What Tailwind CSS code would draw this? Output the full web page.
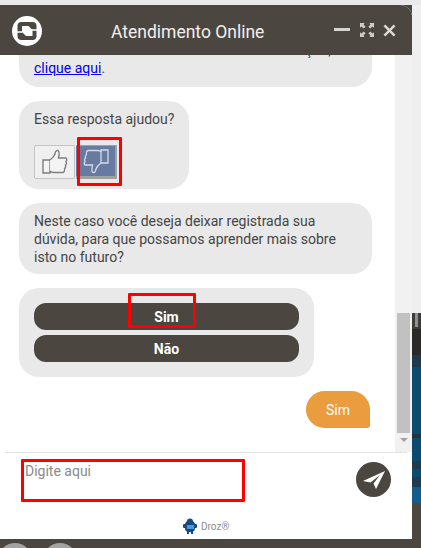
<!DOCTYPE html>
<html>
<head>
<meta charset="utf-8">
<script src="https://cdn.jsdelivr.net/npm/@tailwindcss/browser@4"></script>
</head>
<body class="m-0 overflow-hidden bg-[#4c4640]">
<div class="relative w-[421px] h-[548px] overflow-hidden bg-[#4c4640] font-['Roboto',sans-serif]">
  <!-- backdrop -->
  <div class="absolute right-0 top-0 w-[9px] h-[313px] bg-[#efefef]"></div>
  <div class="absolute right-0 top-[313px] w-[9px] h-[190px] overflow-hidden bg-[#0d4a6f]">
    <div class="h-[16px] bg-[#3b3d38] pl-[3px]"><div class="w-[3px] h-[14px] bg-[#8b938c]"></div></div>
    <div class="h-[26px] bg-[#2b2a28]"></div>
    <div class="h-[12px] bg-[#1f3a4a]"></div>
    <div class="mt-[67px] h-[4px] bg-[#24323a]"></div>
    <div class="mt-[23px] h-[8px] bg-[#1d3c50]"></div>
    <div class="mt-[8px] h-[10px] bg-[#1d3c50]"></div>
    <div class="h-[16px] bg-[#125d8c]"></div>
  </div>
  <div class="absolute left-0 top-0 w-[421px] h-[5px] bg-[#e9e9e9]"></div>
  <div class="absolute left-[-2px] top-[543px] w-[34px] h-[34px] rounded-full bg-[#a3a3a1]"></div>
  <div class="absolute left-[43px] top-[543px] w-[34px] h-[34px] rounded-full bg-[#a3a3a1]"></div>

  <!-- chat window -->
  <div class="absolute left-0 top-[5px] w-[412px] h-[534px] flex flex-col bg-white rounded-tr-[12px] overflow-hidden">
    <header class="shrink-0 h-[50px] bg-[#4c4640] flex items-center text-[#f1f0ee]">
      <svg class="ml-[12px] mt-[2px] shrink-0" width="30" height="30" viewBox="0 0 30 30">
        <circle cx="15" cy="15" r="15" fill="#fff"/>
        <path d="M5.5 10 Q5.5 6 9.5 6 H20.5 Q24.5 6 24.5 10 V20 Q24.5 24 20.5 24 H9.5 Q5.5 24 5.5 20 Z" fill="#4c4640"/>
        <path d="M10 10 H16.5 L20.5 14 V20 H14 L10 16 Z" fill="#fff"/>
        <path d="M10.5 16 L5 16 M19.5 14 L25 14" stroke="#fff" stroke-width="1.6" fill="none"/>
      </svg>
      <div class="ml-[69px] text-[17.5px] leading-[20px] w-[155px] mt-[3px] whitespace-nowrap">Atendimento Online</div>
      <div class="ml-[68px] flex items-center">
        <div class="w-[16px] h-[3px] bg-[#d6d4d0] -mt-[2px]"></div>
        <svg class="ml-[10px]" width="14" height="14" viewBox="0 0 15 15" fill="#cfcdc9">
          <path d="M0 0 H5 L3.7 1.6 L6 4 L4 6 L1.6 3.7 L0 5 Z"/>
          <path d="M15 0 H10 L11.3 1.6 L9 4 L11 6 L13.4 3.7 L15 5 Z"/>
          <path d="M0 15 H5 L3.7 13.4 L6 11 L4 9 L1.6 11.3 L0 10 Z"/>
          <path d="M15 15 H10 L11.3 13.4 L9 11 L11 9 L13.4 11.3 L15 10 Z"/>
        </svg>
        <svg class="ml-[9px]" width="13" height="13" viewBox="0 0 14 14" stroke="#dcdad6" stroke-width="2.6" fill="none"><path d="M1.5 1.5 L12.5 12.5 M12.5 1.5 L1.5 12.5"/></svg>
      </div>
    </header>

    <div class="flex-1 min-h-0 flex">
      <div class="w-[395px] flex flex-col justify-end overflow-hidden pl-[19px] pb-[24px] text-[14px] leading-[18px] text-[#454545]">
        <div class="shrink-0 w-[353px] h-[60px] rounded-[20px] bg-[#e9e9e9] pl-[15px] pr-[14px] pt-[14px]">
          <p class="whitespace-nowrap overflow-hidden">Para saber mais sobre o Termo de Substituição,</p>
          <p><a class="text-[#0000ee] underline">clique aqui</a>.</p>
        </div>
        <div class="shrink-0 mt-[14px] w-[170px] h-[88px] rounded-[20px] bg-[#e9e9e9] pl-[15px] pt-[9px]">
          <p>Essa resposta ajudou?</p>
          <div class="mt-[17px] flex gap-[1px]">
            <button class="w-[41px] h-[34px] border border-[#c4c4c4] bg-[#f0f0f0] rounded-[2px] flex items-center justify-center">
              <svg width="26" height="26" viewBox="0 0 26 26" fill="#f4f4f4" stroke="#7d7d7d" stroke-width="1.4"><path d="M1 11 H8 V24 H1 Z"/><path d="M8 11 Q12 8 13 5 Q13.5 1 16 1.5 Q18 3 16.5 9 H24 Q25.5 10.5 24 12.5 Q25 15 23.5 16 Q24 18.5 22.5 19.5 Q23 23 21 23.5 H12 Q9 23.5 8 22"/></svg>
            </button>
            <button class="w-[41px] h-[34px] bg-[#667aa2] border-t border-r-[2px] border-b-[3px] border-t-[#a1a1a1] border-r-[#a1a1a1] border-b-[#a1a1a1] flex items-center justify-center">
              <svg width="26" height="26" viewBox="0 0 26 26" fill="none" stroke="#d6dae4" stroke-width="1.3"><g transform="rotate(180 13 13)"><path d="M1 11 H8 V24 H1 Z"/><path d="M8 11 Q12 8 13 5 Q13.5 1 16 1.5 Q18 3 16.5 9 H24 Q25.5 10.5 24 12.5 Q25 15 23.5 16 Q24 18.5 22.5 19.5 Q23 23 21 23.5 H12 Q9 23.5 8 22"/></g></svg>
            </button>
          </div>
        </div>
        <div class="shrink-0 mt-[14px] w-[353px] rounded-[20px] bg-[#e9e9e9] pl-[15px] pr-[14px] pt-[9px] pb-[8px]">
          <p>Neste caso você deseja deixar registrada sua dúvida, para que possamos aprender mais sobre isto no futuro?</p>
        </div>
        <div class="shrink-0 mt-[14px] w-[295px] h-[89px] rounded-[20px] bg-[#e9e9e9] pl-[15px] pt-[15px] flex flex-col gap-[5px]">
          <button class="w-[265px] h-[27px] rounded-[12px] bg-[#4c4640] text-white font-bold text-[14px]">Sim</button>
          <button class="w-[265px] h-[27px] rounded-[12px] bg-[#4c4640] text-white font-bold text-[14px]">Não</button>
        </div>
        <div class="shrink-0 mt-[14px] ml-[287px] w-[64px] h-[37px] rounded-[20px] rounded-br-[3px] bg-[#eb9c3f] text-white flex items-center justify-center">Sim</div>
      </div>
      <!-- scrollbar -->
      <div class="relative w-[17px] bg-[#f1f1f1]">
        <div class="absolute left-[2px] top-[258px] w-[13px] h-[120px] bg-[#c1c1c1]"></div>
        <div class="absolute left-[5px] top-[383px] w-0 h-0 border-x-[4px] border-x-transparent border-t-[4px] border-t-[#a3a3a3]"></div>
      </div>
    </div>

    <div class="shrink-0 h-[87px] relative">
      <div class="mx-[5px] h-[1px] bg-[#e4e4e4]"></div>
      <div class="flex items-start pl-[25px] pt-[9px] text-[14px] leading-[18px] text-[#8a8a8a]">
        <span class="w-[331px]">Digite aqui</span>
        <div class="w-[35px] h-[35px] rounded-full bg-[#4c4640] flex items-center justify-center">
          <svg width="24" height="24" viewBox="0 0 24 24" fill="#fff"><path d="M1 13 L23 3 L14 21 L11.5 15.5 L18 7 L8.5 14.5 Z"/></svg>
        </div>
      </div>
      <div class="absolute left-[182px] top-[66px] flex items-center gap-[3px] text-[10px] leading-[12px] text-[#8d8d8d]">
        <svg width="16" height="16" viewBox="0 0 16 16"><rect x="3" y="3" width="10" height="11" rx="4" fill="#154a80"/><circle cx="8" cy="3.5" r="3" fill="#154a80"/><rect x="1" y="6" width="3" height="4" rx="1" fill="#154a80"/><rect x="12" y="6" width="3" height="4" rx="1" fill="#154a80"/><rect x="5" y="7" width="7" height="4" fill="#4a9ad8"/><rect x="5" y="13" width="2" height="3" fill="#154a80"/><rect x="9" y="13" width="2" height="3" fill="#154a80"/></svg>
        <span class="mt-[1px]">Droz®</span>
      </div>
    </div>
  </div>

  <!-- red annotation boxes -->
  <div class="absolute left-[77px] top-[137px] w-[45px] h-[49px] border-[3px] border-[#ff0000] rounded-[1px]"></div>
  <div class="absolute left-[128px] top-[293px] w-[68px] h-[35px] border-[3px] border-[#ff0000] rounded-[1px]"></div>
  <div class="absolute left-[21px] top-[459px] w-[224px] h-[43px] border-[3px] border-[#ff0000] rounded-[1px]"></div>
</div>
</body>
</html>
